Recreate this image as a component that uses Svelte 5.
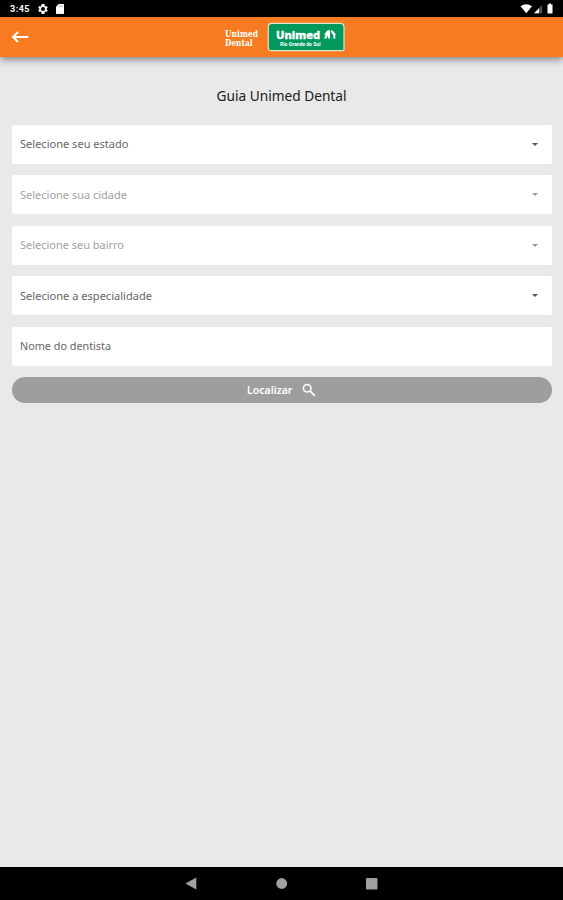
<script lang="ts">
  const fields = [
    { label: 'Selecione seu estado', select: true, disabled: false, width: 108.5 },
    { label: 'Selecione sua cidade', select: true, disabled: true, width: 107 },
    { label: 'Selecione seu bairro', select: true, disabled: true, width: 104 },
    { label: 'Selecione a especialidade', select: true, disabled: false, width: 132 },
    { label: 'Nome do dentista', select: false, disabled: false, width: 91 }
  ];
</script>

<div class="screen">
  <div class="status">
    <span class="time">3:45</span>
    <svg class="gear" width="12" height="12" viewBox="0 0 24 24">
      <path fill="#fff" fill-rule="evenodd" d="M19.4 13c.1-.7.1-1.3 0-2l2.1-1.6-2-3.5-2.5 1a8 8 0 0 0-1.7-1L15 2H9l-.4 3.9a8 8 0 0 0-1.7 1l-2.5-1-2 3.5L4.5 11v2l-2.1 1.6 2 3.5 2.5-1 1.7 1L9 22h6l.3-3.9 1.7-1 2.5 1 2-3.5zM12 8a4 4 0 1 1 0 8 4 4 0 0 1 0-8z" />
    </svg>
    <svg class="card" width="8" height="10" viewBox="0 0 8 10">
      <path fill="#fff" d="M2.7 0H7.5Q8 0 8 .6V9.4Q8 10 7.4 10H.6Q0 10 0 9.4V2.7z" />
      <path stroke="#888" stroke-width=".7" d="M3 1.5v1.6M4.7 1.5v1.6M6.4 1.5v1.6" />
    </svg>
    <svg class="system" width="34" height="12" viewBox="0 0 34 12">
      <path fill="#fff" d="M.5 3.2Q6 -.9 12 3.2L6.3 10.3z" />
      <path fill="#555" d="M22.2 2v8.3H14z" />
      <path fill="#fff" d="M19 5.2v5.1H14z" />
      <path fill="#fff" d="M28 1.5h1V.6h2v.9h1.500v9H27.500v-9z" />
    </svg>
  </div>

  <header>
    <svg class="back" width="18" height="14" viewBox="0 0 18 14">
      <path fill="none" stroke="#fff" stroke-width="2" d="M7 2 2 7l5 5M2 7h15.300" />
    </svg>
    <svg class="brand" width="122" height="32" viewBox="0 0 122 32">
      <g fill="#fff" class="slab">
        <text x="1" y="15" font-size="8.5" textLength="33" lengthAdjust="spacingAndGlyphs">Unimed</text>
        <text x="1" y="24" font-size="8.5" textLength="27.5" lengthAdjust="spacingAndGlyphs">Dental</text>
      </g>
      <path fill="#00995d" stroke="#d9e8d0" stroke-width="1.2" d="M48 1.3H116Q120 1.3 120 5.3V27.500Q120 28.700 118.800 28.700H47.500Q44.300 28.700 44.300 25.500V5Q44.300 1.300 48 1.300z" />
      <g fill="#fff" class="sans">
        <text x="52" y="16.500" font-size="10.500" stroke="#fff" stroke-width=".35" textLength="44" lengthAdjust="spacingAndGlyphs">Unimed</text>
        <text class="region" x="56" y="23.500" font-size="5" textLength="40.500" lengthAdjust="spacingAndGlyphs">Rio Grande do Sul</text>
      </g>
      <path fill="#fff" d="M99.800 13.500 102.300 9.600Q103.200 8.200 105 8.200H106V16.500H103.800V13.200L102.300 16.500H100L102 12.600z" />
      <path fill="#fff" d="M106.800 8.200Q109 8.200 109.800 9.700L112.200 13.200H110.800L111.600 16.500H109.300V13L107.600 11.300z" />
    </svg>
  </header>

  <main>
    <h1><svg width="136" height="24"><text x="2.5" y="17" font-size="14" textLength="130" lengthAdjust="spacingAndGlyphs">Guia Unimed Dental</text></svg></h1>
    <div class="form">
      {#each fields as field}
        <div class="field" class:disabled={field.disabled}>
          <svg class="label" width="150" height="18">
            <text x="0" y="13" font-size="11" textLength={field.width} lengthAdjust="spacingAndGlyphs">{field.label}</text>
          </svg>
          {#if field.select}
            <span class="caret"></span>
          {/if}
        </div>
      {/each}
      <button type="button">
        <span>Localizar</span>
        <svg width="14" height="14" viewBox="0 0 14 14">
          <circle cx="5.2" cy="5.2" r="3.8" fill="none" stroke="#fff" stroke-width="1.5" />
          <path stroke="#fff" stroke-width="1.9" d="m8.2 8.2 4.6 4.6" />
        </svg>
      </button>
    </div>
  </main>

  <nav>
    <svg width="563" height="33" viewBox="0 0 563 33">
      <g fill="#a0a0a0">
        <path d="M185.500 16.500 196.300 10.500V22.500z" />
        <circle cx="281.700" cy="16.500" r="5.400" />
        <rect x="366" y="11" width="11.500" height="11.500" rx="1" />
      </g>
    </svg>
  </nav>
</div>

<style>
  :global(body) {
    margin: 0;
  }

  .screen {
    display: flex;
    flex-direction: column;
    width: 563px;
    height: 900px;
    overflow: hidden;
    background: #e9e9e9;
    font-family: "Noto Sans", sans-serif;
  }

  .status {
    display: flex;
    align-items: center;
    height: 17px;
    padding: 1px 9px 0 10px;
    box-sizing: border-box;
    background: #000;
    color: #fff;
  }

  .time {
    width: 27px;
    font: bold 9px/16px Roboto, sans-serif;
    letter-spacing: 0.5px;
  }

  .card {
    margin-left: 7px;
  }

  .system {
    margin-left: auto;
  }

  header {
    display: flex;
    align-items: center;
    height: 40px;
    flex: none;
    background: #f77b21;
    box-shadow: 0 2px 8px rgba(0, 0, 0, 0.5);
  }

  .back {
    margin-left: 11px;
  }

  .brand {
    margin: 1px 0 0 195px;
  }

  .slab {
    font-family: "DejaVu Serif", serif;
    font-weight: bold;
  }

  .sans {
    font-family: "Noto Sans", sans-serif;
    font-weight: 800;
  }

  .region {
    font-family: Roboto, sans-serif;
    font-weight: 700;
  }

  main {
    flex: 1;
  }

  h1 {
    display: flex;
    justify-content: center;
    margin: 27px 0 16.5px;
    font-weight: 400;
    fill: #202020;
  }

  h1 svg {
    overflow: visible;
  }

  .form {
    display: flex;
    flex-direction: column;
    gap: 11.6px;
    padding: 0 11px 0 11.5px;
  }

  .field {
    display: flex;
    align-items: center;
    justify-content: space-between;
    height: 39px;
    padding: 0 14px 0 8.500px;
    box-sizing: border-box;
    border-radius: 2px;
    background: #fff;
  }

  .label {
    fill: #666;
  }

  .disabled .label {
    fill: #a2a2a2;
  }

  .caret {
    border: 3.5px solid transparent;
    border-top-color: #555;
    border-bottom: 0;
  }

  .disabled .caret {
    border-top-color: #999;
  }

  button {
    display: flex;
    align-items: center;
    justify-content: center;
    gap: 10px;
    height: 26px;
    padding: 0;
    border: 0;
    border-radius: 13px;
    background: #9e9e9e;
    color: #fff;
    font: 600 10.5px "Noto Sans", sans-serif;
  }

  nav {
    height: 33px;
    background: #000;
  }

  nav svg {
    display: block;
  }
</style>
